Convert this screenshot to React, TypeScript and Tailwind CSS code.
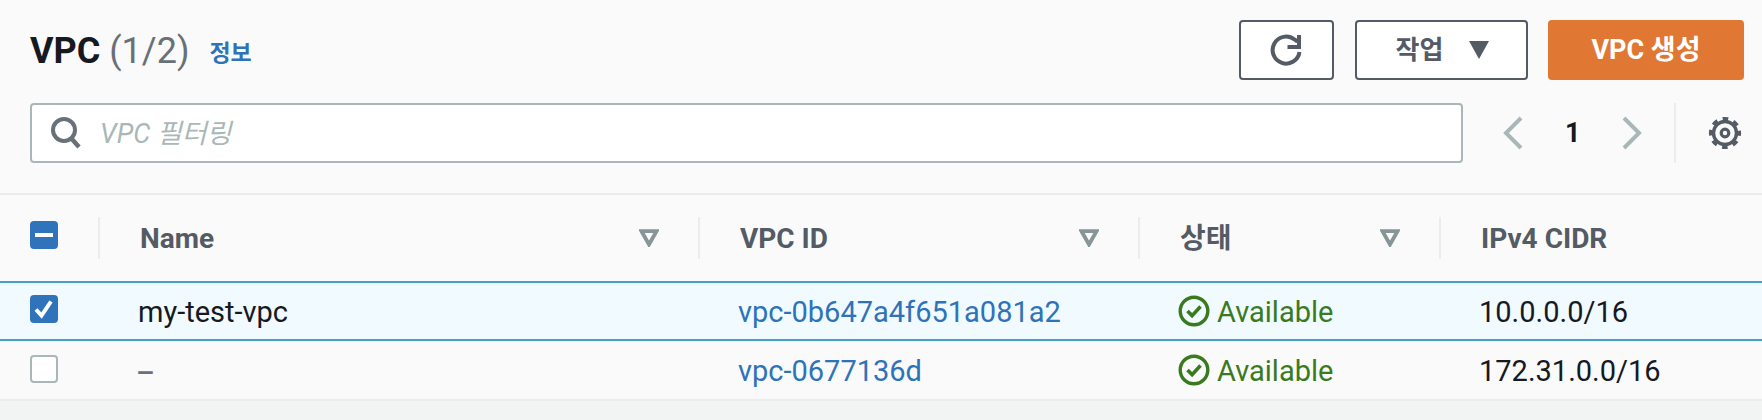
const font = "font-['Roboto','Noto_Sans_CJK_KR',sans-serif]";

function FilterIcon() {
  return (
    <svg width="20" height="18" viewBox="0 0 20 18" className="shrink-0">
      <path d="M2.5 2.2h15L10 15.500z" fill="none" stroke="#879596" strokeWidth="3.800" strokeLinejoin="miter" />
    </svg>
  );
}

function StatusIcon() {
  return (
    <svg width="32" height="32" viewBox="0 0 32 32" className="shrink-0">
      <circle cx="16" cy="16" r="13.800" fill="none" stroke="#3a7a1f" strokeWidth="3.400" />
      <path d="M9.500 16l4.600 4.600L22.500 11.500" fill="none" stroke="#3a7a1f" strokeWidth="3.600" />
    </svg>
  );
}

function Status() {
  return (
    <div className="flex items-center gap-[7px] text-[#3a7a1f]">
      <StatusIcon />
      <span className="pt-[3px]">Available</span>
    </div>
  );
}

function HeaderCell({ label, filter = true }: { label: string; filter?: boolean }) {
  return (
    <div className="flex h-[42px] items-center justify-between border-l-2 border-[#eaeded] pl-[40px] pr-[39px] text-[28px] font-bold text-[#545b64]">
      <span className="pt-[1px]">{label}</span>
      {filter && <FilterIcon />}
    </div>
  );
}

function Checkbox({ state }: { state: 'none' | 'some' | 'all' }) {
  if (state === 'none') {
    return <div className="h-[28px] w-[28px] rounded-[4px] border-2 border-[#aab7b8] bg-white" />;
  }
  return (
    <div className="flex h-[28px] w-[28px] items-center justify-center rounded-[4px] bg-[#2f74bb]">
      <svg width="28" height="28" viewBox="0 0 28 28">
        {state === 'some' ? (
          <path d="M5 14h18" stroke="#fff" strokeWidth="4" />
        ) : (
          <path d="M6 14.500l5.500 6L21 6.500" fill="none" stroke="#fff" strokeWidth="4" />
        )}
      </svg>
    </div>
  );
}

const grid = 'grid grid-cols-[98px_600px_440px_301px_1fr] items-center';

export default function App() {
  return (
    <div className={`${font} h-[420px] w-[1762px] overflow-hidden bg-[#f2f3f3] text-[#16191f]`}>
      <div className="bg-[#fafafa]">
        {/* Title and actions */}
        <div className="px-[18px] pl-[30px] pt-[20px]">
          <div className="flex h-[60px] items-center justify-between">
            <div className="flex items-center pt-[2px]">
              <h1 className="text-[36px] font-bold">
                VPC <span className="font-normal text-[#687078]">(1/2)</span>
              </h1>
              <a className="ml-[20px] mt-[6px] text-[23px] font-bold text-[#2e73b8]">정보</a>
            </div>
            <div className="flex items-center">
              <button className="flex h-[60px] w-[95px] items-center justify-center rounded-[4px] border-2 border-[#545b64] bg-white">
                <svg width="36" height="36" viewBox="0 0 36 36">
                  <path d="M30.500 20a13.500 13.500 0 1 1-5-12.500l3 2" fill="none" stroke="#545b64" strokeWidth="4" />
                  <path d="M32 3v14H18.500v-4h9.500V3z" fill="#545b64" />
                </svg>
              </button>
              <button className="ml-[21px] flex h-[60px] w-[173px] items-center justify-center gap-[26px] rounded-[4px] border-2 border-[#545b64] bg-white pl-[2px] text-[26px] font-bold text-[#545b64]">
                작업
                <svg width="20" height="18" viewBox="0 0 20 18">
                  <path d="M0 0h20L10 18z" fill="#545b64" />
                </svg>
              </button>
              <button className="ml-[20px] flex h-[60px] w-[196px] items-center justify-center rounded-[4px] bg-[#e07833] text-[27px] font-bold text-white">
                VPC 생성
              </button>
            </div>
          </div>

          {/* Search and pagination */}
          <div className="mt-[23px] flex h-[60px] items-center">
            <div className="flex h-[60px] w-[1433px] items-center rounded-[4px] border-2 border-[#aab7b8] bg-white pl-[18px]">
              <svg width="32" height="34" viewBox="0 0 32 34">
                <circle cx="14" cy="14" r="11" fill="none" stroke="#687078" strokeWidth="4" />
                <path d="M21 22l8 9" stroke="#687078" strokeWidth="4.500" />
              </svg>
              <span className="ml-[18px] pt-[2px] text-[27px] italic text-[#aab7b8]">VPC 필터링</span>
            </div>
            <svg width="22" height="34" viewBox="0 0 22 34" className="ml-[39px]">
              <path d="M19 2L4 17l15 15" fill="none" stroke="#aab7b8" strokeWidth="4" />
            </svg>
            <span className="ml-[41px] w-[16px] text-[27px] font-bold">1</span>
            <svg width="22" height="34" viewBox="0 0 22 34" className="ml-[40px]">
              <path d="M3 2l15 15L3 32" fill="none" stroke="#aab7b8" strokeWidth="4" />
            </svg>
            <div className="ml-[31px] h-[60px] w-[2px] bg-[#eaeded]" />
            <svg width="34" height="34" viewBox="0 0 34 34" className="ml-[32px]">
              <circle cx="17" cy="17" r="11.500" fill="none" stroke="#545b64" strokeWidth="3.400" />
              <circle cx="17" cy="17" r="14.300" fill="none" stroke="#545b64" strokeWidth="3.600" strokeDasharray="5.650 5.580" strokeDashoffset="2.800" />
              <circle cx="17" cy="17" r="3.800" fill="none" stroke="#545b64" strokeWidth="3.200" />
            </svg>
          </div>
        </div>

        {/* Table */}
        <div className="mt-[30px] border-t-2 border-[#eaeded]">
          <div className={`${grid} h-[86px]`}>
            <div className="pb-[6px] pl-[30px]">
              <Checkbox state="some" />
            </div>
            <HeaderCell label="Name" />
            <HeaderCell label="VPC ID" />
            <HeaderCell label="상태" />
            <HeaderCell label="IPv4 CIDR" filter={false} />
          </div>
          <div className={`${grid} h-[60px] border-y-2 border-[#44a0c8] bg-[#f1faff] text-[29px]`}>
            <div className="pb-[4px] pl-[30px]">
              <Checkbox state="all" />
            </div>
            <div className="pl-[40px] pt-[3px]">my-test-vpc</div>
            <a className="pl-[40px] pt-[3px] text-[#2e73b8]">vpc-0b647a4f651a081a2</a>
            <div className="pl-[40px]">
              <Status />
            </div>
            <div className="pl-[40px] pt-[3px]">10.0.0.0/16</div>
          </div>
          <div className={`${grid} h-[60px] border-b-2 border-[#eaeded] text-[29px]`}>
            <div className="pb-[2px] pl-[30px]">
              <Checkbox state="none" />
            </div>
            <div className="pl-[38px] pt-[7px] font-medium text-[#687078]">–</div>
            <a className="pl-[40px] pt-[3px] text-[#2e73b8]">vpc-0677136d</a>
            <div className="pl-[40px]">
              <Status />
            </div>
            <div className="pl-[40px] pt-[3px]">172.31.0.0/16</div>
          </div>
        </div>
      </div>
    </div>
  );
}
